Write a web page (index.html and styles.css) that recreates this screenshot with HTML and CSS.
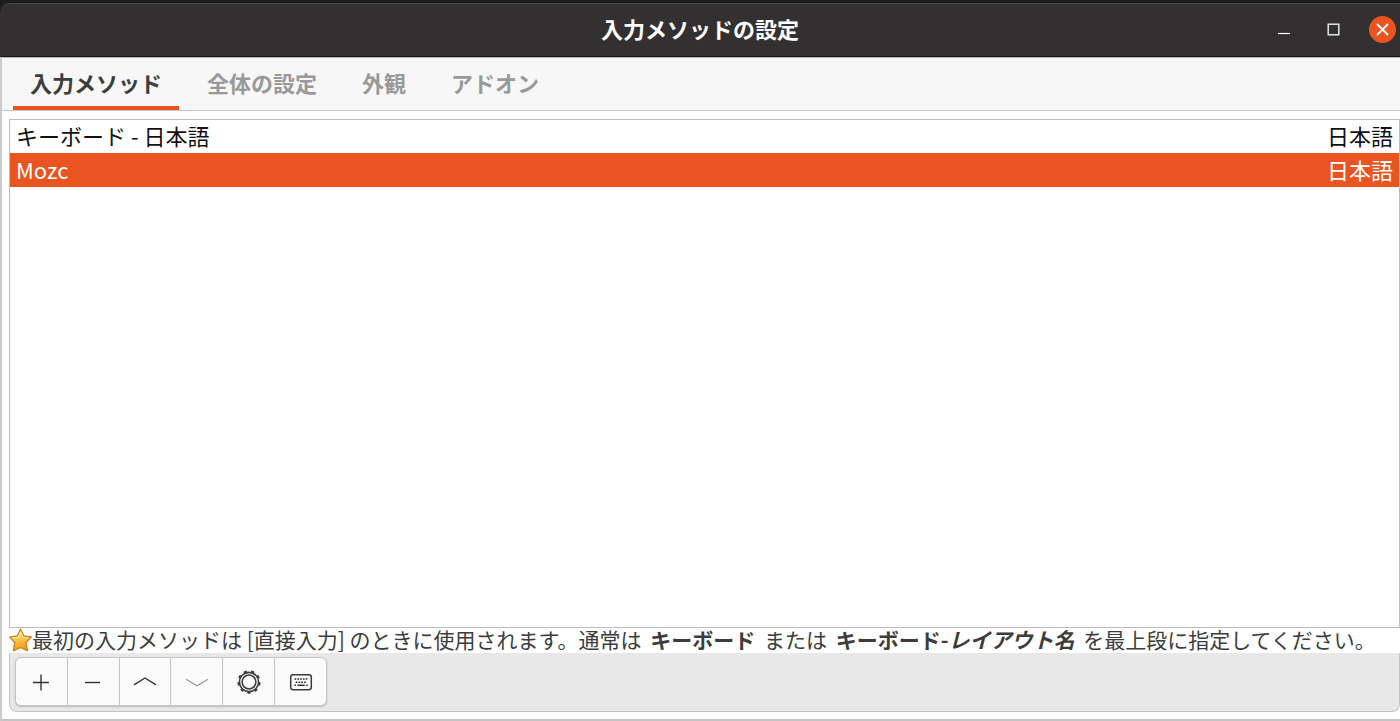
FILE: index.html
```html
<!DOCTYPE html>
<html lang="ja">
<head>
<meta charset="utf-8">
<title>入力メソッドの設定</title>
<link rel="stylesheet" href="styles.css">
</head>
<body>
<div class="window">
  <header class="titlebar">
    <h1 class="title">入力メソッドの設定</h1>
    <div class="window-controls">
      <button class="control" type="button" aria-label="最小化"><svg width="27" height="27" viewBox="0 0 27 27"><path d="M7 17.5H19" stroke="#fff" stroke-width="1.2"/></svg></button>
      <button class="control" type="button" aria-label="最大化"><svg width="27" height="27" viewBox="0 0 27 27"><rect x="8.2" y="8.2" width="10.6" height="10.6" fill="none" stroke="#f2f2f2" stroke-width="1.4"/></svg></button>
      <button class="control close" type="button" aria-label="閉じる"><svg width="27" height="27" viewBox="0 0 27 27"><path d="M8 8L19 19M19 8L8 19" stroke="#fff" stroke-width="1.8"/></svg></button>
    </div>
  </header>
  <main class="content">
    <nav class="tabs" role="tablist">
      <button class="tab active" type="button" role="tab" aria-selected="true">入力メソッド</button>
      <button class="tab" type="button" role="tab" aria-selected="false">全体の設定</button>
      <button class="tab" type="button" role="tab" aria-selected="false">外観</button>
      <button class="tab" type="button" role="tab" aria-selected="false">アドオン</button>
    </nav>
    <section class="panel">
      <div class="list">
        <table class="methods">
          <tbody>
            <tr><td>キーボード - 日本語</td><td class="lang">日本語</td></tr>
            <tr class="selected"><td>Mozc</td><td class="lang">日本語</td></tr>
          </tbody>
        </table>
      </div>
      <div class="hint">
        <svg class="star" width="23" height="24" viewBox="0 0 23 24">
          <defs><linearGradient id="gold" x1="0" y1="0" x2="0.3" y2="1"><stop offset="0" stop-color="#fff0a0"/><stop offset="0.5" stop-color="#fbc950"/><stop offset="1" stop-color="#f09a20"/></linearGradient></defs>
          <path d="M11.5 1.2L14.9 8L22.3 9L17 14.5L18.4 22.6L11.5 19.5L4.4 22.8L5.8 14.8L0.8 9.1L8.1 8Z" fill="url(#gold)" stroke="#c78318" stroke-width="1.3" stroke-linejoin="round"/>
          <path d="M11.500 3.800L13.900 9.200L19.800 10" fill="none" stroke="#fff3bd" stroke-width="0.9"/>
          <path d="M11.500 3.800L9.100 9.200L3 10.100" fill="none" stroke="#fff3bd" stroke-width="0.9"/>
        </svg>
        <p class="hint-text">最初の入力メソッドは [直接入力] のときに使用されます。通常は <b>キーボード</b> または <b>キーボード-<i>レイアウト名</i></b> を最上段に指定してください。</p>
      </div>
      <div class="toolbar">
        <div class="button-group">
          <button class="tool" type="button" aria-label="追加"><svg width="26" height="26" viewBox="0 0 26 26"><path d="M5 13.5H21M13 5.500V21.500" stroke="#333" stroke-width="1.4"/></svg></button>
          <button class="tool" type="button" aria-label="削除"><svg width="26" height="26" viewBox="0 0 26 26"><path d="M5 13.500H20" stroke="#333" stroke-width="1.4"/></svg></button>
          <button class="tool" type="button" aria-label="上へ"><svg width="26" height="26" viewBox="0 0 26 26"><path d="M2 15.800L13 9L24 15.800" fill="none" stroke="#333" stroke-width="1.4"/></svg></button>
          <button class="tool" type="button" aria-label="下へ" disabled><svg width="26" height="26" viewBox="0 0 26 26"><path d="M2 10.200L13 16.800L24 10.200" fill="none" stroke="#999" stroke-width="1.3"/></svg></button>
          <button class="tool" type="button" aria-label="設定"><svg width="26" height="26" viewBox="0 0 26 26"><g fill="none" stroke="#3c3c3c"><circle cx="13" cy="13" r="9.600" stroke-width="1.600"/><circle cx="13" cy="13" r="6.900" stroke-width="1.500"/><circle cx="13" cy="13" r="10.800" stroke-width="1.700" pathLength="90" stroke-dasharray="4.400 5.600" stroke-dashoffset="-20.300"/></g></svg></button>
          <button class="tool" type="button" aria-label="キーボードレイアウト"><svg width="26" height="26" viewBox="0 0 26 26"><rect x="2.700" y="5.700" width="20.600" height="15" rx="2.400" fill="none" stroke="#3c3c3c" stroke-width="1.500"/><g fill="none" stroke="#333" stroke-width="1.400"><path d="M6.500 10H20" stroke-dasharray="1.700 1.100"/><path d="M7.700 13.200H19" stroke-dasharray="1.700 1.100"/><path d="M6.500 16.300H8M9.500 16.300H16.800M18.300 16.300H19.800"/></g></svg></button>
        </div>
      </div>
    </section>
  </main>
</div>
</body>
</html>
```
FILE: styles.css
```css
* {
  box-sizing: border-box;
}

body {
  margin: 0;
  background: #1d1d1d;
  color: #3d3d3d;
  font-family: "Noto Sans CJK JP", "Noto Sans", sans-serif;
  font-size: 22px;
}

button {
  margin: 0;
  padding: 0;
  border: 0;
  background: none;
  color: inherit;
  font: inherit;
}

svg {
  display: block;
}

.window {
  display: flex;
  flex-direction: column;
  min-height: 100vh;
  padding-top: 3px;
}

.titlebar {
  display: grid;
  grid-template-columns: 1fr auto 1fr;
  align-items: center;
  height: 54px;
  padding: 0 4px 2px;
  border-top: 1px solid #444;
  border-bottom: 1px solid #191919;
  border-top-left-radius: 10px;
  background: #333031;
  color: #fff;
}

.title {
  grid-column: 2;
  margin: 0;
  padding-bottom: 2px;
  font-size: 22px;
  font-weight: 700;
  line-height: 30px;
}

.window-controls {
  display: flex;
  justify-content: flex-end;
  gap: 22px;
}

.control {
  width: 27px;
  height: 27px;
}

.close {
  border-radius: 50%;
  background: #e95420;
}

.content {
  display: flex;
  flex: 1;
  flex-direction: column;
  border-left: 2px solid #ccc;
  border-bottom: 2px solid #c4c4c4;
  background: #fff;
}

.tabs {
  display: flex;
  gap: 11px;
  padding-left: 11px;
  border-top: 1px solid #b4b4b4;
  border-bottom: 1px solid #c4c4c4;
  background: #f7f7f7;
}

.tab {
  height: 52px;
  padding: 0 17px;
  border-bottom: 4px solid transparent;
  color: #999;
  font-weight: 700;
  line-height: 30px;
}

.active {
  border-bottom-color: #e95420;
  color: #3d3d3d;
}

.panel {
  display: flex;
  flex: 1;
  flex-direction: column;
  padding: 8px 0 7px 7px;
}

.list {
  flex: 1;
  border: 1px solid #bebebe;
  background: #fff;
}

.methods {
  width: 100%;
  border-collapse: collapse;
  color: #111;
}

.methods td {
  height: 33px;
  padding: 0 6px 3px;
  line-height: 30px;
}

.methods .lang {
  text-align: right;
}

.methods .selected {
  height: 34px;
  background: #e95420;
  color: #fff;
}

.hint {
  display: flex;
  align-items: flex-start;
  height: 25px;
}

.hint-text {
  margin: 0;
  font-size: 21px;
  line-height: 22px;
  white-space: nowrap;
}

.hint-text > b {
  margin: 0 4px;
}

.toolbar {
  padding: 4px 5px 5px;
  border: 1px solid #c4c4c4;
  border-top: 0;
  border-radius: 0 0 8px 8px;
  background: #e8e8e8;
}

.button-group {
  display: inline-flex;
  width: 312px;
  border: 1px solid #c4c4c4;
  border-radius: 6px;
  background: #fbfbfb;
  box-shadow: 0 1px 2px #bbb;
  vertical-align: top;
}

.tool {
  display: grid;
  flex: 1;
  place-items: center;
  height: 47px;
}

.tool + .tool {
  border-left: 1px solid #c4c4c4;
}
```
